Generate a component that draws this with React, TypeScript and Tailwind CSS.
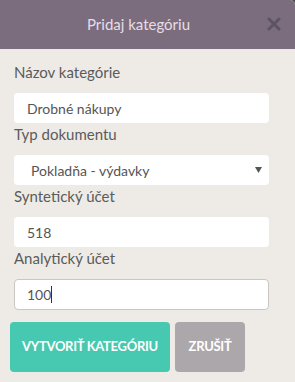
const FONT = { fontFamily: "Lato, 'Open Sans', sans-serif" };

function Label({ children }: { children: React.ReactNode }) {
  return (
    <label className="block text-[15px] leading-[22px] mb-[10px] text-[#5b5b5b]">
      {children}
    </label>
  );
}

function TextInput({ value, focused }: { value: string; focused?: boolean }) {
  return (
    <div
      className={
        focused
          ? "h-[31px] w-[255px] bg-white rounded-[4px] border border-[#c9c6c3] flex items-center pl-[12px] text-[14px] text-[#555]"
          : "h-[30px] w-[255px] bg-white rounded-[4px] flex items-center pl-[13px] text-[14px] text-[#555]"
      }
    >
      <span>{value}</span>
      {focused && <span className="w-px h-[17px] bg-[#333]" />}
    </div>
  );
}

export default function App() {
  return (
    <div className="w-[295px] h-[382px] bg-[#4d4a4c] overflow-hidden" style={FONT}>
      <div className="h-full bg-[#eeebe6] rounded-tr-[5px] overflow-hidden">
        {/* header */}
        <div className="h-[49px] bg-[#7b6d7e] relative flex items-center justify-center pr-[18px]">
          <span className="text-[15px] text-[#e6dde7]">Pridaj kategóriu</span>
          <button className="absolute left-[267px] top-[17px]">
            <svg width="14" height="14" viewBox="0 0 14 14">
              <path
                d="M2 2L12 12M12 2L2 12"
                stroke="#5d5461"
                strokeWidth="3"
                strokeLinecap="round"
              />
            </svg>
          </button>
        </div>

        {/* form */}
        <div className="pt-[12px] px-[14px]">
          <Label>Názov kategórie</Label>
          <TextInput value="Drobné nákupy" />

          <Label>Typ dokumentu</Label>
          <div className="h-[30px] w-[255px] bg-white rounded-[4px] flex items-center justify-between pl-[17px] pr-[7px] text-[14px] text-[#555]">
            <span>Pokladňa - výdavky</span>
            <svg width="7" height="6" viewBox="0 0 7 6">
              <path d="M0 0H7L3.5 6Z" fill="#555" />
            </svg>
          </div>

          <Label>Syntetický účet</Label>
          <TextInput value="518" />

          <Label>Analytický účet</Label>
          <TextInput value="100" focused />
        </div>

        {/* actions */}
        <div className="flex gap-[5px] pl-[10px] mt-[12px]">
          <button className="h-[50px] w-[160px] rounded-[4px] bg-[#46c9b0] text-white font-bold text-[13px] tracking-[-0.3px] uppercase">
            Vytvoriť kategóriu
          </button>
          <button className="h-[50px] w-[70px] rounded-[4px] bg-[#aca7ab] text-white font-bold text-[13px] tracking-[-0.3px] uppercase">
            Zrušiť
          </button>
        </div>
      </div>
    </div>
  );
}
